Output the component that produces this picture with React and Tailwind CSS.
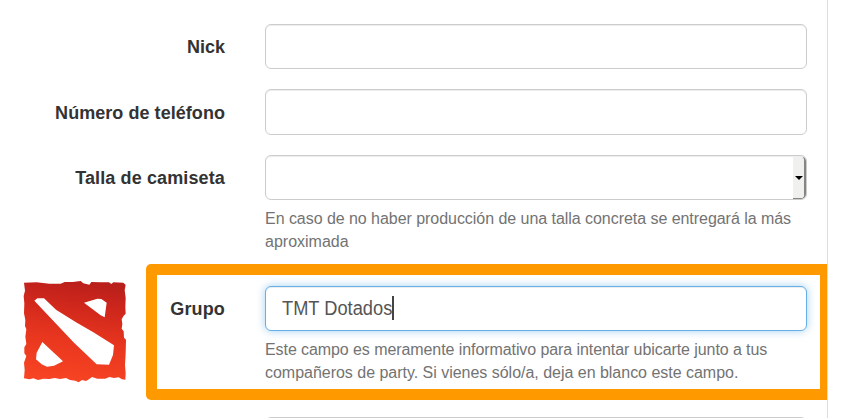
import React from "react";

const inputBase =
  "block w-[542px] shrink-0 rounded-[6px] border bg-white outline-none";
const inputIdle =
  "border-[#ccc] shadow-[inset_0_1px_1px_rgba(0,0,0,0.075)]";

function Label({ children, className }) {
  return (
    <label
      className={`shrink-0 whitespace-nowrap text-right text-[18px] leading-[24px] font-bold text-[#333] ${className}`}
    >
      {children}
    </label>
  );
}

function Help({ lines }) {
  return (
    <div className="pt-[7px] text-[16px] leading-[23px] text-[#737373]">
      {lines.map(([text, tracking]) => (
        <p key={text} className={`whitespace-nowrap ${tracking}`}>
          {text}
        </p>
      ))}
    </div>
  );
}

function DotaLogo() {
  return (
    <svg viewBox="0 0 390 375" className="block h-[125px] w-[130px]">
      <defs>
        <linearGradient id="red" x1="0.6" y1="0" x2="0.45" y2="1">
          <stop offset="0" stopColor="#b91f1b" />
          <stop offset="0.25" stopColor="#cf271c" />
          <stop offset="0.6" stopColor="#e9371f" />
          <stop offset="1" stopColor="#f74423" />
        </linearGradient>
      </defs>
      <path
        fill="url(#red)"
        fillRule="evenodd"
        d="M42 38 L80 37 L118 41 L152 41 L164 36 L188 36 L212 33 L220 40 L238 44 L244 36 L270 37 L297 37 L304 42 L310 37 L340 38 L347 45 L344 60 L347 84 L346 112 L347 131 L341 137 L335 148 L337 162 L335 176 L341 184 L342 203 L348 209 L347 250 L345 285 L347 310 L346 329 L336 328 L326 322 L312 324 L298 321 L286 326 L262 326 L246 321 L238 327 L228 333 L216 330 L206 337 L196 332 L180 330 L168 324 L150 327 L134 324 L118 327 L100 326 L84 330 L70 325 L58 328 L42 325 L44 300 L42 278 L49 258 L43 250 L43 232 L49 222 L46 200 L49 178 L45 168 L46 150 L42 130 L43 100 L41 78 L45 62 Z M73 92 L82 85 L102 85 L138 119 L198 157 L250 187 L312 226 L309 255 L297 284 L260 283 L192 218 Z M222 98 L262 86 L274 87 L290 98 L284 142 L272 136 Z M97 216 L159 274 L132 287 L111 290 L95 283 L78 268 L80 248 Z"
      />
    </svg>
  );
}

export default function App() {
  return (
    <div
      className="h-[418px] w-[846px] overflow-hidden bg-white"
      style={{ fontFamily: '"Liberation Sans", Arial, sans-serif' }}
    >
      <form className="flex h-[418px] w-[828px] flex-col overflow-hidden border-r border-[#ddd] pt-[24px]">
        <div className="mb-[20px] flex shrink-0 gap-[40px]">
          <Label className="w-[225px] pt-[11px]">Nick</Label>
          <input className={`${inputBase} ${inputIdle} h-[45px]`} />
        </div>
        <div className="mb-[20px] flex shrink-0 gap-[40px]">
          <Label className="w-[225px] pt-[12px] tracking-[0.05px]">Número de teléfono</Label>
          <input className={`${inputBase} ${inputIdle} h-[46px]`} />
        </div>
        <div className="flex h-[109px] shrink-0 gap-[40px]">
          <Label className="w-[225px] pt-[11px] tracking-[0.12px]">Talla de camiseta</Label>
          <div className="w-[542px]">
            <div
              className={`${inputBase} ${inputIdle} flex h-[45px] justify-end overflow-hidden`}
            >
              <div className="mt-px flex h-[43px] w-[13px] items-center justify-center rounded-r-[4px] border-r-2 border-b-2 border-[#858585] bg-[#f0f0ee]">
                <svg viewBox="0 0 8 4" className="h-[4px] w-[8px]">
                  <path d="M0 0H8L4 4Z" fill="#000" />
                </svg>
              </div>
            </div>
            <Help
              lines={[
                ["En caso de no haber producción de una talla concreta se entregará la más", "tracking-[-0.045px]"],
                ["aproximada", ""],
              ]}
            />
          </div>
        </div>
        <div className="flex h-[136px] shrink-0">
          <div className="w-[146px] shrink-0 pt-[6px] pl-[10px]">
            <DotaLogo />
          </div>
          <div className="flex w-[681px] shrink-0 rounded-l-[5px] bg-[#ff9900] py-[11px] pr-[7px] pl-[11px]">
            <div className="flex h-[114px] w-[663px] shrink-0 gap-[40px] bg-white pt-[11px]">
              <Label className="w-[68px] pt-[11px] tracking-[0.15px]">Grupo</Label>
              <div className="w-[542px]">
                <div
                  className={`${inputBase} flex h-[45px] items-center border-[#66afe9] pl-[16px] shadow-[inset_0_1px_1px_rgba(0,0,0,0.075),0_0_8px_rgba(102,175,233,0.6)]`}
                >
                  <span className="-mt-[2px] w-[110px] origin-left scale-x-[0.913] text-[20px] leading-[24px] whitespace-nowrap text-[#555]">
                    TMT Dotados
                  </span>
                  <span className="-mt-px h-[24px] w-[2px] bg-[#444]" />
                </div>
                <Help
                  lines={[
                    ["Este campo es meramente informativo para intentar ubicarte junto a tus", "tracking-[-0.08px]"],
                    ["compañeros de party. Si vienes sólo/a, deja en blanco este campo.", "tracking-[-0.02px]"],
                  ]}
                />
              </div>
            </div>
          </div>
        </div>
        <div className="mt-[17px] flex shrink-0 pl-[265px]">
          <input className={`${inputBase} ${inputIdle} h-[45px]`} />
        </div>
      </form>
    </div>
  );
}
